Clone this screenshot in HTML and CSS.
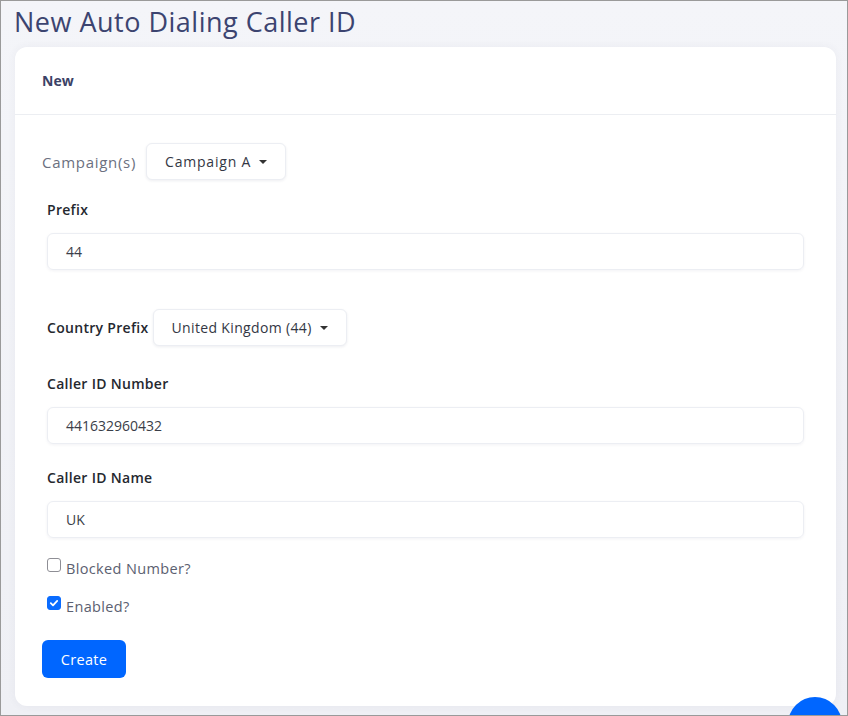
FILE: index.html
```html
<!DOCTYPE html>
<html>
<head>
<meta charset="utf-8">
<link rel="stylesheet" href="styles.css">
</head>
<body>
<div class="frame">
  <h1 class="title">New Auto Dialing Caller ID</h1>
  <div class="card">
    <div class="card-header">New</div>
    <div class="card-body">
      <div class="inline-row campaigns">
        <span class="muted-label">Campaign(s)</span>
        <button class="dropdown dd-campaign">Campaign A <span class="caret"></span></button>
      </div>
      <div class="group">
        <label class="label">Prefix</label>
        <div class="input">44</div>
      </div>
      <div class="group inline-row country">
        <label class="label">Country Prefix</label>
        <button class="dropdown">United Kingdom (44) <span class="caret"></span></button>
      </div>
      <div class="group">
        <label class="label">Caller ID Number</label>
        <div class="input">441632960432</div>
      </div>
      <div class="group">
        <label class="label">Caller ID Name</label>
        <div class="input">UK</div>
      </div>
      <div class="checks">
        <div class="check-row">
          <span class="box"></span><span class="check-text">Blocked Number?</span>
        </div>
        <div class="check-row">
          <span class="box checked"><svg viewBox="0 0 14 14" width="14" height="14"><path d="M3.8 7.2 L6 9.3 L10.2 4.9" fill="none" stroke="#fff" stroke-width="1.8" stroke-linecap="round" stroke-linejoin="round"/></svg></span><span class="check-text">Enabled?</span>
        </div>
      </div>
      <button class="btn-primary">Create</button>
    </div>
  </div>
  <div class="fab"></div>
</div>
</body>
</html>
```

FILE: styles.css
```css
* { box-sizing: border-box; }
html, body { margin: 0; padding: 0; }
body { font-family: "Open Sans", "Noto Sans", sans-serif; }
.frame {
  position: relative;
  width: 848px;
  height: 716px;
  border: 1px solid #9a9a9a;
  background: linear-gradient(#f4f5f9, #eff0f5);
  overflow: hidden;
  padding: 0 11px 0 14px;
}
.title {
  margin: 3px 0 0 -1px;
  font-size: 27px;
  font-weight: 400;
  color: #3c4470;
  line-height: 35px;
  height: 43px;
  letter-spacing: 0.5px;
}
.card {
  background: #fff;
  border-radius: 12px;
  box-shadow: 0 0 8px rgba(60, 70, 110, 0.06);
  height: 659px;
}
.card-header {
  height: 68px;
  padding: 0 27px;
  display: flex;
  align-items: center;
  font-size: 14px;
  font-weight: 700;
  color: #3b4266;
  border-bottom: 1px solid #eceef2;
}
.card-body {
  padding: 28px 27px 0 27px;
}
.inline-row { display: flex; align-items: center; }
.muted-label {
  font-size: 15px;
  letter-spacing: 0.7px;
  color: #6b7080;
  margin-right: 10px;
}
.dropdown {
  font-family: inherit;
  height: 37px;
  background: #fff;
  border: 1px solid #eceef3;
  border-radius: 6px;
  box-shadow: 0 1px 3px rgba(30, 40, 80, 0.08);
  padding: 0 18px 0 18px;
  font-size: 14px;
  letter-spacing: 0.35px;
  color: #333744;
  display: flex;
  align-items: center;
}
.dd-campaign { letter-spacing: 0.8px; }
.caret {
  display: inline-block;
  width: 0; height: 0;
  border-left: 4px solid transparent;
  border-right: 4px solid transparent;
  border-top: 4px solid #333;
  margin-left: 8px;
}
.group { margin: 0 5px; }
.label {
  display: block;
  font-size: 14px;
  font-weight: 600;
  letter-spacing: 0.3px;
  color: #25282f;
}
.campaigns { margin-bottom: 20px; }
.group .label { line-height: 20px; margin-bottom: 13px; }
.input {
  height: 37px;
  border: 1px solid #eceef3;
  border-radius: 6px;
  box-shadow: 0 1px 3px rgba(30, 40, 80, 0.06);
  padding: 0 18px;
  display: flex;
  align-items: center;
  font-size: 14px;
  color: #3a3e48;
  margin-bottom: 24px;
}
.country { margin-top: 39px; margin-bottom: 28px; }
.group.country .label { margin: 0 4px 0 0; }
.checks { margin: -4px 5px 0 5px; }
.check-row {
  display: flex;
  align-items: flex-start;
  height: 18px;
  margin-bottom: 20px;
}
.box {
  width: 14px; height: 14px;
  border: 1px solid #8e8e95;
  border-radius: 3px;
  margin-right: 5px;
  display: inline-flex;
  flex-shrink: 0;
}
.box.checked { background: #0a6cff; border-color: #0a6cff; }
.box.checked svg { margin: -1px; }
.check-text {
  font-size: 14.5px;
  line-height: 18px;
  margin-top: 2px;
  letter-spacing: 0.35px;
  color: #5b6070;
}
.btn-primary {
  margin-top: 6px;
  font-family: inherit;
  width: 84px;
  height: 38px;
  background: #0066ff;
  border: none;
  border-radius: 6px;
  color: #fff;
  font-size: 14.5px;
  font-weight: 500;
  letter-spacing: 0.3px;
}
.fab {
  position: absolute;
  right: 5px;
  bottom: -36px;
  width: 54px;
  height: 54px;
  border-radius: 50%;
  background: #0066ff;
}
```
